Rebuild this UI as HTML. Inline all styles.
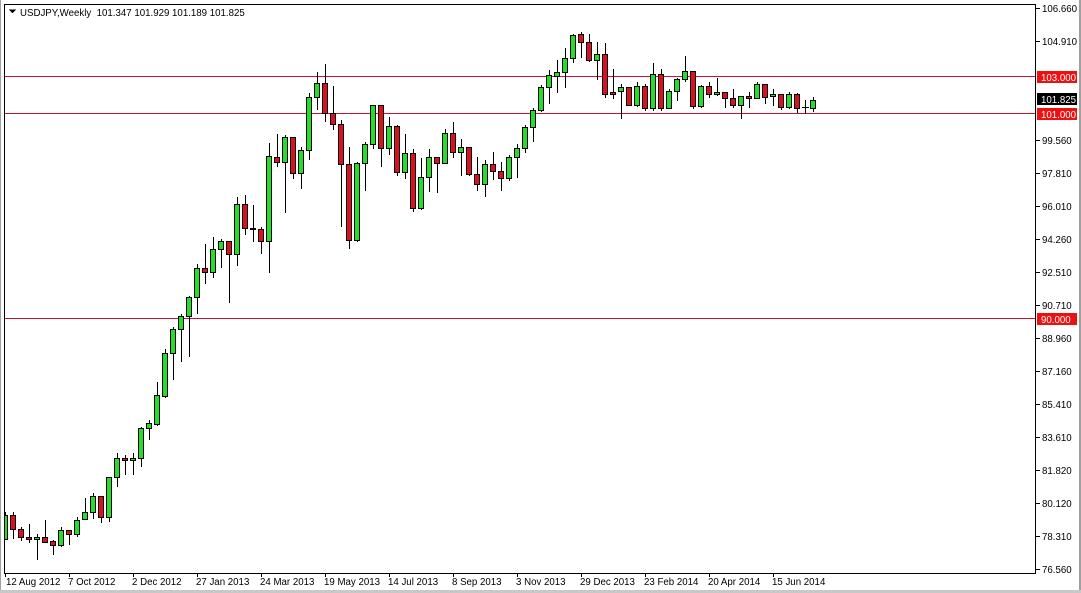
<!DOCTYPE html>
<html><head><meta charset="utf-8"><style>
html,body{margin:0;padding:0;background:#fff;}
body{width:1081px;height:593px;overflow:hidden;position:relative;}
svg{position:absolute;left:0;top:0;}
text{font-family:"Liberation Sans",Tahoma,sans-serif;font-size:9.7px;fill:#000;}
.g{fill:#22e022;stroke:#000;stroke-width:1}
.r{fill:#dd1020;stroke:#000;stroke-width:1}
</style></head><body>
<svg width="1081" height="593" viewBox="0 0 1081 593" shape-rendering="crispEdges">
<rect x="0" y="0" width="1081" height="593" fill="#fff"/>
<rect x="0" y="0" width="1" height="593" fill="#a0a0a0"/>
<rect x="1079" y="0" width="2" height="593" fill="#a0a0a0"/>
<rect x="0" y="590" width="1081" height="3" fill="#c8c8c8"/>
<defs><clipPath id="c"><rect x="5" y="5" width="1031" height="568"/></clipPath></defs>
<g clip-path="url(#c)">
<path d="M4 76.5H1036M4 113.5H1036M4 318.5H1036" stroke="#cc1030" stroke-width="1"/>
<path stroke="#000" stroke-width="1" d="M5.5 512V540M13.5 512V539M21.5 527V541M29.5 524V543M37.5 534V560M45.5 520V543M53.5 540V555M61.5 527V547M69.5 530V545M77.5 517V537M85.5 498V520M93.5 493V519M101.5 496V523M109.5 477V522M117.5 453V487M125.5 455V475M133.5 453V475M141.5 427V467M149.5 420V440M157.5 382V426M165.5 349V398M173.5 327V380M181.5 314V362M189.5 296V357M197.5 264V314M205.5 244V284M213.5 237V278M221.5 239V268M229.5 241V303M237.5 197V266M245.5 195V235M253.5 205V242M261.5 227V254M269.5 143V273M277.5 134V167M285.5 135V213M293.5 137V179M301.5 147V189M309.5 93V160M317.5 72V110M325.5 64V122M333.5 86V130M341.5 120V227M349.5 147V249M357.5 162V242M365.5 142V191M373.5 105V149M381.5 105V167M389.5 117V155M397.5 125V176M405.5 134V179M413.5 149V212M421.5 158V210M429.5 149V192M437.5 157V193M445.5 129V164M453.5 122V158M461.5 139V176M469.5 147V176M477.5 157V191M485.5 160V197M493.5 152V180M501.5 162V191M509.5 155V181M517.5 144V178M525.5 125V153M533.5 108V142M541.5 85V112M549.5 70V104M557.5 60V93M565.5 48V88M573.5 34V63M581.5 32V58M589.5 34V62M597.5 42V80M605.5 43V98M613.5 69V99M621.5 84V119M629.5 87V105M637.5 82V107M645.5 84V111M653.5 63V111M661.5 69V111M669.5 89V109M677.5 78V101M685.5 56V82M693.5 71V109M701.5 85V108M709.5 82V98M717.5 78V96M725.5 92V108M733.5 89V108M741.5 96V119M749.5 92V108M757.5 82V99M765.5 84V104M773.5 89V106M781.5 94V110M789.5 92V109M797.5 93V113M805.5 100V114M813.5 97V112M802 107.5H809"/>
<rect class="g" x="2.5" y="515.5" width="5" height="24"/>
<rect class="r" x="10.5" y="515.5" width="5" height="14"/>
<rect class="r" x="18.5" y="529.5" width="5" height="8"/>
<rect class="r" x="26.5" y="537.5" width="5" height="2"/>
<rect class="g" x="34.5" y="537.5" width="5" height="2"/>
<rect class="r" x="42.5" y="537.5" width="5" height="5"/>
<rect class="r" x="50.5" y="541.5" width="5" height="4"/>
<rect class="g" x="58.5" y="530.5" width="5" height="15"/>
<rect class="r" x="66.5" y="530.5" width="5" height="4"/>
<rect class="g" x="74.5" y="520.5" width="5" height="14"/>
<rect class="g" x="82.5" y="512.5" width="5" height="7"/>
<rect class="g" x="90.5" y="496.5" width="5" height="16"/>
<rect class="r" x="98.5" y="496.5" width="5" height="21"/>
<rect class="g" x="106.5" y="477.5" width="5" height="40"/>
<rect class="g" x="114.5" y="458.5" width="5" height="19"/>
<rect class="r" x="122.5" y="458.5" width="5" height="2"/>
<rect class="g" x="130.5" y="458.5" width="5" height="2"/>
<rect class="g" x="138.5" y="428.5" width="5" height="30"/>
<rect class="g" x="146.5" y="423.5" width="5" height="5"/>
<rect class="g" x="154.5" y="395.5" width="5" height="29"/>
<rect class="g" x="162.5" y="353.5" width="5" height="43"/>
<rect class="g" x="170.5" y="329.5" width="5" height="24"/>
<rect class="g" x="178.5" y="316.5" width="5" height="13"/>
<rect class="g" x="186.5" y="297.5" width="5" height="19"/>
<rect class="g" x="194.5" y="268.5" width="5" height="29"/>
<rect class="r" x="202.5" y="268.5" width="5" height="4"/>
<rect class="g" x="210.5" y="249.5" width="5" height="23"/>
<rect class="g" x="218.5" y="241.5" width="5" height="8"/>
<rect class="r" x="226.5" y="241.5" width="5" height="13"/>
<rect class="g" x="234.5" y="204.5" width="5" height="50"/>
<rect class="r" x="242.5" y="204.5" width="5" height="24"/>
<rect class="r" x="250.5" y="228.5" width="5" height="1"/>
<rect class="r" x="258.5" y="229.5" width="5" height="12"/>
<rect class="g" x="266.5" y="156.5" width="5" height="85"/>
<rect class="r" x="274.5" y="157.5" width="5" height="5"/>
<rect class="g" x="282.5" y="137.5" width="5" height="25"/>
<rect class="r" x="290.5" y="137.5" width="5" height="36"/>
<rect class="g" x="298.5" y="150.5" width="5" height="23"/>
<rect class="g" x="306.5" y="97.5" width="5" height="53"/>
<rect class="g" x="314.5" y="83.5" width="5" height="14"/>
<rect class="r" x="322.5" y="83.5" width="5" height="30"/>
<rect class="r" x="330.5" y="113.5" width="5" height="11"/>
<rect class="r" x="338.5" y="124.5" width="5" height="40"/>
<rect class="r" x="346.5" y="164.5" width="5" height="76"/>
<rect class="g" x="354.5" y="163.5" width="5" height="77"/>
<rect class="g" x="362.5" y="144.5" width="5" height="19"/>
<rect class="g" x="370.5" y="105.5" width="5" height="39"/>
<rect class="r" x="378.5" y="105.5" width="5" height="43"/>
<rect class="g" x="386.5" y="126.5" width="5" height="22"/>
<rect class="r" x="394.5" y="126.5" width="5" height="46"/>
<rect class="g" x="402.5" y="153.5" width="5" height="19"/>
<rect class="r" x="410.5" y="153.5" width="5" height="55"/>
<rect class="g" x="418.5" y="177.5" width="5" height="31"/>
<rect class="g" x="426.5" y="157.5" width="5" height="20"/>
<rect class="r" x="434.5" y="157.5" width="5" height="6"/>
<rect class="g" x="442.5" y="133.5" width="5" height="30"/>
<rect class="r" x="450.5" y="133.5" width="5" height="19"/>
<rect class="g" x="458.5" y="147.5" width="5" height="5"/>
<rect class="r" x="466.5" y="147.5" width="5" height="27"/>
<rect class="r" x="474.5" y="174.5" width="5" height="10"/>
<rect class="g" x="482.5" y="164.5" width="5" height="20"/>
<rect class="r" x="490.5" y="164.5" width="5" height="7"/>
<rect class="r" x="498.5" y="171.5" width="5" height="7"/>
<rect class="g" x="506.5" y="157.5" width="5" height="21"/>
<rect class="g" x="514.5" y="148.5" width="5" height="9"/>
<rect class="g" x="522.5" y="127.5" width="5" height="21"/>
<rect class="g" x="530.5" y="110.5" width="5" height="17"/>
<rect class="g" x="538.5" y="87.5" width="5" height="23"/>
<rect class="g" x="546.5" y="75.5" width="5" height="12"/>
<rect class="g" x="554.5" y="72.5" width="5" height="4"/>
<rect class="g" x="562.5" y="58.5" width="5" height="14"/>
<rect class="g" x="570.5" y="35.5" width="5" height="23"/>
<rect class="r" x="578.5" y="34.5" width="5" height="8"/>
<rect class="r" x="586.5" y="42.5" width="5" height="18"/>
<rect class="g" x="594.5" y="54.5" width="5" height="6"/>
<rect class="r" x="602.5" y="54.5" width="5" height="40"/>
<rect class="r" x="610.5" y="92.5" width="5" height="2"/>
<rect class="g" x="618.5" y="87.5" width="5" height="4"/>
<rect class="r" x="626.5" y="87.5" width="5" height="18"/>
<rect class="g" x="634.5" y="86.5" width="5" height="19"/>
<rect class="r" x="642.5" y="86.5" width="5" height="22"/>
<rect class="g" x="650.5" y="74.5" width="5" height="34"/>
<rect class="r" x="658.5" y="74.5" width="5" height="34"/>
<rect class="g" x="666.5" y="91.5" width="5" height="17"/>
<rect class="g" x="674.5" y="79.5" width="5" height="12"/>
<rect class="g" x="682.5" y="71.5" width="5" height="8"/>
<rect class="r" x="690.5" y="71.5" width="5" height="35"/>
<rect class="g" x="698.5" y="86.5" width="5" height="20"/>
<rect class="r" x="706.5" y="86.5" width="5" height="8"/>
<rect class="g" x="714.5" y="92.5" width="5" height="2"/>
<rect class="r" x="722.5" y="92.5" width="5" height="6"/>
<rect class="r" x="730.5" y="98.5" width="5" height="7"/>
<rect class="g" x="738.5" y="96.5" width="5" height="9"/>
<rect class="r" x="746.5" y="96.5" width="5" height="2"/>
<rect class="g" x="754.5" y="84.5" width="5" height="14"/>
<rect class="r" x="762.5" y="84.5" width="5" height="13"/>
<rect class="g" x="770.5" y="94.5" width="5" height="2"/>
<rect class="r" x="778.5" y="94.5" width="5" height="13"/>
<rect class="g" x="786.5" y="94.5" width="5" height="13"/>
<rect class="r" x="794.5" y="94.5" width="5" height="14"/>
<rect class="g" x="810.5" y="100.5" width="5" height="8"/>
</g>
<rect x="4.5" y="4.5" width="1031" height="569" fill="none" stroke="#000"/>
<path d="M9 9.5h7l-3.5 4z" fill="#000"/>
<text x="20" y="16">USDJPY,Weekly&#160;&#160;101.347 101.929 101.189 101.825</text>
<g stroke="#000">
<path d="M1036 8.5h4M1036 41.5h4M1036 140.5h4M1036 173.5h4M1036 206.5h4M1036 239.5h4M1036 272.5h4M1036 305.5h4M1036 338.5h4M1036 371.5h4M1036 404.5h4M1036 437.5h4M1036 470.5h4M1036 503.5h4M1036 536.5h4M1036 569.5h4"/>
<path d="M5.5 573v4M69.5 573v4M133.5 573v4M197.5 573v4M261.5 573v4M325.5 573v4M389.5 573v4M453.5 573v4M517.5 573v4M581.5 573v4M645.5 573v4M709.5 573v4M773.5 573v4"/>
</g>
<g>
<text x="1042" y="12">106.660</text>
<text x="1042" y="45">104.910</text>
<text x="1042" y="144">99.560</text>
<text x="1042" y="177">97.810</text>
<text x="1042" y="210">96.010</text>
<text x="1042" y="243">94.260</text>
<text x="1042" y="276">92.510</text>
<text x="1042" y="309">90.710</text>
<text x="1042" y="342">88.960</text>
<text x="1042" y="375">87.160</text>
<text x="1042" y="408">85.410</text>
<text x="1042" y="441">83.610</text>
<text x="1042" y="474">81.820</text>
<text x="1042" y="507">80.120</text>
<text x="1042" y="540">78.310</text>
<text x="1042" y="573">76.560</text>
</g>
<rect x="1037" y="71" width="40" height="12" fill="#ee1010"/>
<text x="1041" y="81" style="fill:#fff">103.000</text>
<rect x="1037" y="93" width="40" height="12" fill="#000"/>
<text x="1041" y="103" style="fill:#fff">101.825</text>
<rect x="1037" y="108" width="40" height="12" fill="#ee1010"/>
<text x="1041" y="118" style="fill:#fff">101.000</text>
<rect x="1037" y="313" width="40" height="12" fill="#ee1010"/>
<text x="1041" y="323" style="fill:#fff">90.000</text>
<g>
<text x="6" y="585">12 Aug 2012</text>
<text x="68" y="585">7 Oct 2012</text>
<text x="132" y="585">2 Dec 2012</text>
<text x="196" y="585">27 Jan 2013</text>
<text x="260" y="585">24 Mar 2013</text>
<text x="324" y="585">19 May 2013</text>
<text x="388" y="585">14 Jul 2013</text>
<text x="452" y="585">8 Sep 2013</text>
<text x="516" y="585">3 Nov 2013</text>
<text x="580" y="585">29 Dec 2013</text>
<text x="644" y="585">23 Feb 2014</text>
<text x="708" y="585">20 Apr 2014</text>
<text x="772" y="585">15 Jun 2014</text>
</g>
</svg>
</body></html>
